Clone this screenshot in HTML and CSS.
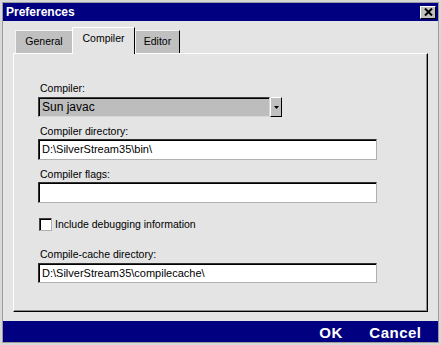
FILE: index.html
```html
<!DOCTYPE html>
<html lang="en">
<head>
  <meta charset="UTF-8" />
  <title>Preferences</title>
  <link rel="stylesheet" href="styles.css">
</head>
<body>
  <div class="window">
    <div class="titlebar">
      <span class="title">Preferences</span>
      <div class="close">
        <svg width="9" height="8" viewBox="0 0 9 8"><path d="M1 0.5 L8 7.5 M8 0.5 L1 7.5" stroke="#000" stroke-width="2"/></svg>
      </div>
    </div>

    <div class="main">
      <div class="tabs">
        <div class="tab tab-general">General</div>
        <div class="tab tab-compiler">Compiler</div>
        <div class="tab tab-editor">Editor</div>
      </div>

      <div class="panel">
        <div class="field-label">Compiler:</div>
        <div class="combo">
          <div class="combo-value">Sun javac</div>
          <div class="combo-button">
            <svg width="5" height="3" viewBox="0 0 5 3"><polygon points="0,0 5,0 2.5,3" fill="#000"/></svg>
          </div>
        </div>

        <div class="field-label gap">Compiler directory:</div>
        <div class="text-field">D:\SilverStream35\bin\</div>

        <div class="field-label gap">Compiler flags:</div>
        <div class="text-field"></div>

        <div class="check-row">
          <div class="checkbox"></div>
          <span>Include debugging information</span>
        </div>

        <div class="field-label gap-big">Compile-cache directory:</div>
        <div class="text-field short">D:\SilverStream35\compilecache\</div>
      </div>
    </div>

    <div class="footer">
      <span>OK</span>
      <span>Cancel</span>
    </div>
  </div>
</body>
</html>
```

FILE: styles.css
```css
body {
  margin: 0;
  font-family: "Liberation Sans", Arial, sans-serif;
  color: #000;
}
.window {
  width: 441px;
  height: 345px;
  box-sizing: border-box;
  padding: 3px;
  background: #e4e4e4;
  display: flex;
  flex-direction: column;
  box-shadow: inset 0 0 0 2px #d8d8d8, inset 0 0 0 3px #9c9c9c;
}
.titlebar {
  height: 18px;
  background: #000080;
  display: flex;
  align-items: center;
  justify-content: space-between;
  padding: 0 2px 0 3px;
}
.title {
  color: #fff;
  font-weight: bold;
  font-size: 12px;
  line-height: 18px;
}
.close {
  width: 16px;
  height: 13px;
  box-sizing: border-box;
  background: #c0c0c0;
  border: 1px solid;
  border-color: #fff #000 #000 #fff;
  display: flex;
  align-items: center;
  justify-content: center;
}
.main {
  flex: 1;
  display: flex;
  flex-direction: column;
  padding: 6px 10px 9px 10px;
}
.tabs {
  display: flex;
  align-items: flex-end;
  height: 26px;
  padding-left: 2px;
}
.tab {
  box-sizing: border-box;
  height: 23px;
  background: #c0c0c0;
  border-top: 1px solid #f4f4f4;
  border-left: 1px solid #f4f4f4;
  border-right: 1px solid #000;
  font-size: 10.5px;
  line-height: 13px;
  padding-top: 4px;
  text-align: center;
}
.tab-general {
  width: 57px;
  border-right: none;
}
.tab-compiler {
  width: 63px;
  height: 27px;
  margin-bottom: -1px;
  background: #e4e4e4;
  border-top-color: #fff;
  border-left-color: #fff;
  position: relative;
  z-index: 1;
}
.tab-editor {
  width: 45px;
}
.panel {
  flex: 1;
  box-sizing: border-box;
  border: 1px solid;
  border-color: #fff #000 #000 #fff;
  box-shadow: inset -1px -1px #8c8c8c;
  padding: 28px 0 0 24px;
  display: flex;
  flex-direction: column;
  align-items: flex-start;
}
.field-label {
  font-size: 10.5px;
  line-height: 13px;
  padding-left: 2px;
}
.field-label.gap {
  margin-top: 8px;
}
.field-label.gap-big {
  margin-top: 17px;
}
.combo {
  display: flex;
  margin-top: 2px;
  height: 20px;
}
.combo-value {
  width: 232px;
  box-sizing: border-box;
  background: #bdbdbd;
  border: 1px solid;
  border-color: #404040 #d8d8d8 #d8d8d8 #404040;
  box-shadow: inset 1px 1px #000;
  font-size: 12px;
  line-height: 18px;
  padding-left: 3px;
}
.combo-button {
  width: 12px;
  height: 20px;
  box-sizing: border-box;
  background: #c0c0c0;
  border: 1px solid;
  border-color: #fff #000 #000 #fff;
  display: flex;
  align-items: center;
  justify-content: center;
  padding-top: 1px;
}
.text-field {
  width: 339px;
  height: 21px;
  margin-top: 1px;
  box-sizing: border-box;
  background: #fff;
  border: 1px solid;
  border-color: #303030 #b0b0b0 #b0b0b0 #303030;
  box-shadow: inset 1px 1px #000;
  font-size: 11px;
  line-height: 19px;
  padding-left: 3px;
  white-space: nowrap;
}
.text-field.short {
  height: 20px;
  margin-top: 2px;
  line-height: 18px;
}
.check-row {
  display: flex;
  align-items: center;
  gap: 3px;
  margin-top: 15px;
  margin-left: 1px;
  height: 13px;
  font-size: 10.5px;
  line-height: 13px;
}
.checkbox {
  width: 13px;
  height: 13px;
  box-sizing: border-box;
  background: #fff;
  border: 1px solid;
  border-color: #404040 #b0b0b0 #b0b0b0 #404040;
  box-shadow: inset 1px 1px #000;
}
.footer {
  height: 21px;
  box-sizing: border-box;
  background: #000080;
  display: flex;
  justify-content: flex-end;
  gap: 26.5px;
  padding: 3px 16.5px 0 0;
  color: #fff;
  font-weight: bold;
  font-size: 15px;
  line-height: 18px;
  letter-spacing: 0.5px;
}
```
